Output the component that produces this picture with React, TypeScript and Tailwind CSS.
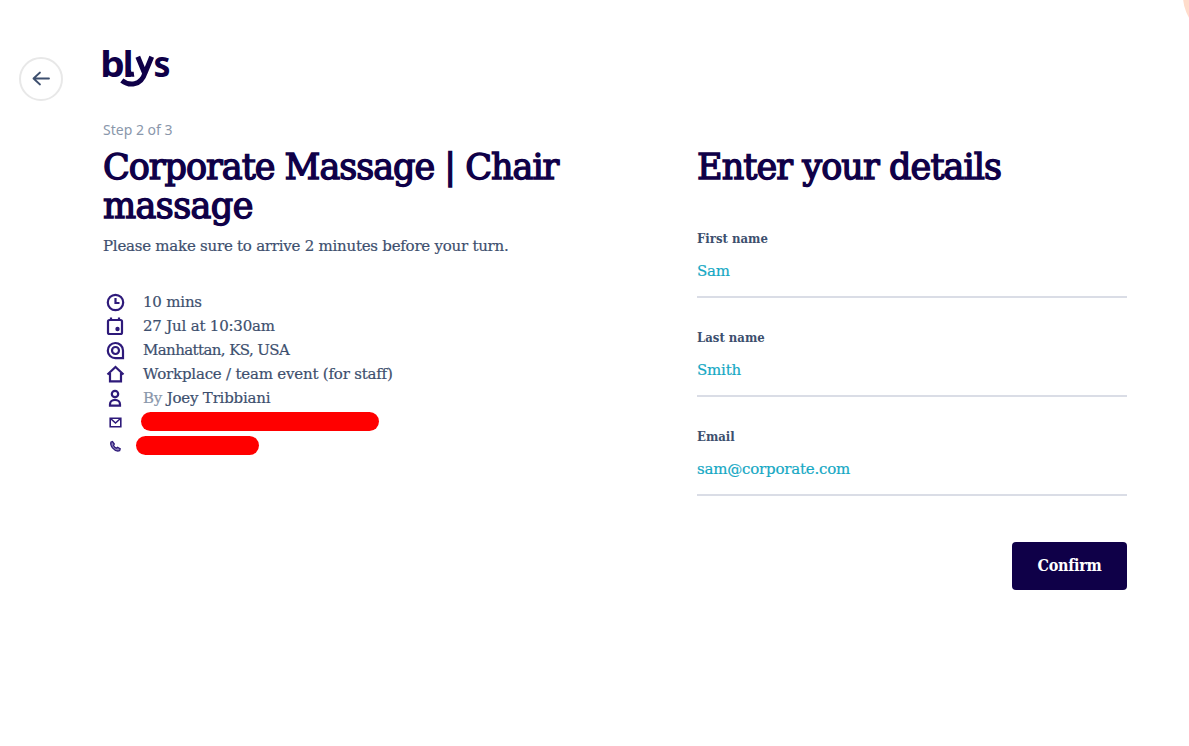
import React, { useState } from 'react';

type IconProps = { children: React.ReactNode };

const Icon: React.FC<IconProps> = ({ children }) => (
  <svg width="24" height="24" viewBox="0 0 24 24" fill="none" stroke="#2e1a7a" strokeWidth="2.2" className="shrink-0">
    {children}
  </svg>
);

const Logo: React.FC = () => (
  <svg width="68" height="40" viewBox="0 0 68 40" fill="#0f0048" className="block overflow-visible">
    <g fontFamily="'Noto Sans', sans-serif" fontWeight="700" fontSize="36">
      <text x="-2.8" y="28.8" textLength="24.5" lengthAdjust="spacingAndGlyphs">b</text>
      <text x="19.8" y="28.5">l</text>
      <text x="50.5" y="28.8" textLength="17" lengthAdjust="spacingAndGlyphs">s</text>
    </g>
    {/* y whose tail runs back under the l */}
    <path d="M25.4 22Q25.2 27 31 26.2" fill="none" stroke="#0f0048" strokeWidth="5" />
    <path d="M34.8 8.7L41.5 25M48.7 8.7L42 25C38 37.5 26.5 38.5 18.8 32.5" fill="none" stroke="#0f0048" strokeWidth="5" />
  </svg>
);

type FieldProps = {
  id: string;
  label: string;
  value: string;
  onChange: (value: string) => void;
};

const Field: React.FC<FieldProps> = ({ id, label, value, onChange }) => (
  <div className="h-[99px]">
    <label
      htmlFor={id}
      className="block h-5 font-['DejaVu_Serif_Condensed','DejaVu_Serif',serif] text-[13px] leading-5 font-bold text-[#3d4f6e]"
    >
      {label}
    </label>
    <input
      id={id}
      value={value}
      onChange={(e) => onChange(e.target.value)}
      className="block h-[49px] w-full border-b-2 border-[#dadde6] pb-[4px] text-[15px] tracking-[-0.2px] text-[#15a8c4] outline-none [-webkit-text-stroke:0.2px]"
    />
  </div>
);

const App: React.FC = () => {
  const [firstName, setFirstName] = useState('Sam');
  const [lastName, setLastName] = useState('Smith');
  const [email, setEmail] = useState('sam@corporate.com');

  return (
    <div className="relative flex h-[746px] w-[1189px] overflow-hidden bg-white font-['DejaVu_Serif',serif]">
      {/* corner decoration */}
      <div className="absolute -top-[46px] left-[1183px] h-[84px] w-[84px] rounded-full bg-[#ffdccb]" />

      <div className="w-[103px] shrink-0 pt-[57px] pl-[19px]">
        <button aria-label="Back" className="flex h-11 w-11 items-center justify-center rounded-full border-2 border-[#e8e8e8]">
          <svg width="24" height="24" viewBox="0 0 24 24" fill="none" stroke="#3d4f6e" strokeWidth="1.8" strokeLinecap="round" strokeLinejoin="round">
            <path d="M20 11.5H4.5M11 5.5L4.5 11.5L11 17.5" />
          </svg>
        </button>
      </div>

      <div className="w-[594px] shrink-0 pt-[48px]">
        <Logo />
        <p className="mt-[32px] font-['Noto_Sans',sans-serif] text-sm leading-5 text-[#8a97ab]">Step 2 of 3</p>
        <h1 className="mt-2 h-20 text-[35px] leading-[39px] font-normal text-[#0f0048] [-webkit-text-stroke:1.4px]">
          <span className="block tracking-[-1px] whitespace-nowrap">Corporate Massage | Chair</span>
          <span className="block tracking-[-0.6px]">massage</span>
        </h1>
        <p className="mt-[6px] text-[15px] leading-6 tracking-[-0.24px] whitespace-nowrap text-[#3d4f6e] [-webkit-text-stroke:0.2px]">
          Please make sure to arrive 2 minutes before your turn.
        </p>

        <ul className="mt-8 text-[15px] leading-6 tracking-[-0.2px] text-[#3d4f6e] [-webkit-text-stroke:0.2px]">
          <li className="flex h-6 gap-4">
            <Icon>
              <circle cx="12.5" cy="12.5" r="7.7" />
              <path d="M12.5 8V13H16.5" />
            </Icon>
            <span>10 mins</span>
          </li>
          <li className="flex h-6 gap-4">
            <Icon>
              <rect x="5" y="6" width="14" height="14" rx="1.5" />
              <path d="M8 3.5V6M16 3.5V6" />
              <circle cx="14.5" cy="15" r="2.2" fill="#2e1a7a" stroke="none" />
            </Icon>
            <span>27 Jul at 10:30am</span>
          </li>
          <li className="flex h-6 gap-4">
            <Icon>
              <path d="M20 20.2H12.5A7.6 7.6 0 1 1 20 12.5Z" />
              <circle cx="12.5" cy="12.5" r="3.5" />
            </Icon>
            <span className="tracking-[-0.6px]">Manhattan, KS, USA</span>
          </li>
          <li className="flex h-6 gap-4">
            <Icon>
              <path d="M4.5 12.5L12.5 5L20.5 12.5M7 11V19.3H18V11" />
            </Icon>
            <span>Workplace / team event (for staff)</span>
          </li>
          <li className="flex h-6 gap-4">
            <Icon>
              <circle cx="12" cy="8" r="3.2" />
              <path d="M7 19.6V18.2A5 4.4 0 0 1 17 18.2V19.6Z" />
            </Icon>
            <span>
              <span className="text-[#8a97ab]">By</span> Joey Tribbiani
            </span>
          </li>
          <li className="flex h-6">
            <Icon>
              <path d="M7.2 8.2H17.8V16.8H7.2ZM7.5 8.5L12.5 13L17.5 8.5" strokeWidth="1.6" />
            </Icon>
            <span className="mt-[2px] ml-[14px] h-[19px] w-[238px] rounded-full bg-[#ff0000]" />
          </li>
          <li className="flex h-6">
            <Icon>
              <path d="M8 8L9.5 7.5L11.3 10L10.4 11.3Q11.5 13.5 13.4 14.2L14.5 13.3L17.2 14.8L16.6 16.7Q13 18 9.5 13.8Q7 10.5 8 8Z" fill="#8f84ba" strokeWidth="1.3" />
            </Icon>
            <span className="mt-[2px] ml-[9px] h-[19px] w-[123px] rounded-full bg-[#ff0000]" />
          </li>
        </ul>
      </div>

      <div className="w-[430px] shrink-0 pt-[147px]">
        <h2 className="h-[82px] text-[35px] leading-[40px] font-normal tracking-[-0.9px] whitespace-nowrap text-[#0f0048] [-webkit-text-stroke:1.4px]">
          Enter your details
        </h2>
        <Field id="first" label="First name" value={firstName} onChange={setFirstName} />
        <Field id="last" label="Last name" value={lastName} onChange={setLastName} />
        <Field id="email" label="Email" value={email} onChange={setEmail} />
        <div className="flex justify-end pt-4">
          <button className="h-12 w-[115px] rounded bg-[#0f0048] font-['DejaVu_Serif_Condensed','DejaVu_Serif',serif] text-[16px] font-bold tracking-[-0.3px] text-white">
            Confirm
          </button>
        </div>
      </div>
    </div>
  );
};

export default App;
